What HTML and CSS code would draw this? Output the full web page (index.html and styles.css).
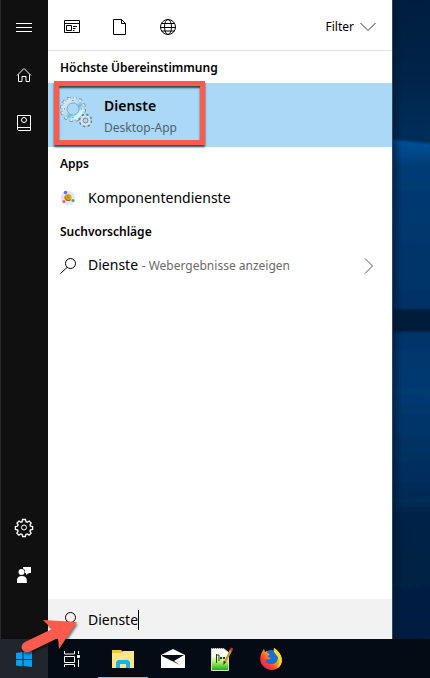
FILE: index.html
```html
<!DOCTYPE html>
<html lang="de">
<head>
<meta charset="utf-8">
<meta name="viewport" content="width=device-width, initial-scale=1">
<title>Windows-Suche</title>
<link rel="stylesheet" href="styles.css">
</head>
<body>
<div class="desktop">
  <div class="workspace">
    <nav class="rail" aria-label="Navigation">
      <button class="rail-button" type="button" aria-label="Menü">
        <svg width="24" height="24" viewBox="0 0 24 24"><path d="M4 8.500h16M4 12.500h16M4 16.500h16"/></svg>
      </button>
      <button class="rail-button" type="button" aria-label="Start">
        <svg width="24" height="24" viewBox="0 0 24 24"><path d="M5 12.500 12 5.500l7 7M6.500 11.500v7h3.500v-5h4v5h3.500v-7"/></svg>
      </button>
      <button class="rail-button" type="button" aria-label="Notizbuch">
        <svg width="24" height="24" viewBox="0 0 24 24"><path d="M5.500 4.500h13v15h-12l-1-1zM5.500 16.500h13"/><circle cx="12" cy="9" r="2.500"/></svg>
      </button>
      <span class="rail-space"></span>
      <button class="rail-button" type="button" aria-label="Einstellungen">
        <svg width="24" height="24" viewBox="0 0 24 24"><path stroke-width="1.300" d="M10.500 4.500h3l.5 2.200 1.300.5 1.900-1.200 2 2-1.200 1.900.5 1.300 2.100.4v2.800l-2.100.5-.6 1.300 1.200 1.900-2 2-1.900-1.200-1.300.5-.5 2.100h-2.800l-.5-2.100-1.300-.5-1.900 1.200-2-2 1.200-1.900-.6-1.300-2.100-.5v-2.800l2.100-.4.6-1.300L5 8l2-2 1.900 1.200 1.200-.5z"/><circle cx="12" cy="12.500" r="2.500"/></svg>
      </button>
      <button class="rail-button" type="button" aria-label="Feedback">
        <svg class="solid" width="24" height="24" viewBox="0 0 24 24"><path d="M11 4h8v6h-2l-3 2v-2h-1.200A3.600 3.600 0 0 0 11 5.500z"/><circle cx="9.500" cy="9" r="3"/><path d="M5 20v-2.500c0-3 1.500-4.500 4.800-4.500s5 1.500 5 4.500V20z"/></svg>
      </button>
    </nav>

    <main class="panel">
      <header class="scopes">
        <button class="scope" type="button" aria-label="Apps">
          <svg width="18" height="18" viewBox="0 0 18 18"><path d="M1.500 2.500h15v12h-15zM1.500 5.500h15M3.500 7.500h5v5h-5zM10 8.500h4M10 10.500h2.500M10 12.500h1.500"/></svg>
        </button>
        <button class="scope" type="button" aria-label="Dokumente">
          <svg width="18" height="18" viewBox="0 0 18 18"><path d="M2.500 1.500h8l4 4v11h-12zM10.500 1.500v4h4"/></svg>
        </button>
        <button class="scope" type="button" aria-label="Web">
          <svg width="18" height="18" viewBox="0 0 18 18"><circle cx="9" cy="9" r="7.500"/><ellipse cx="9" cy="9" rx="3.500" ry="7.500"/><path d="M2.500 5.500h13M1.500 9.500h15M2.500 13h13"/></svg>
        </button>
        <button class="filter" type="button">Filter
          <svg width="16" height="10" viewBox="0 0 16 10"><path d="m.5 1 7.500 7.500L15.500 1"/></svg>
        </button>
      </header>

      <section>
        <h2 class="group-title">Höchste Übereinstimmung</h2>
        <a class="best-match" href="#dienste">
          <svg class="gears" width="32" height="32" viewBox="0 0 32 32">
            <defs><linearGradient id="steel" x1="0" y1="0" x2="1" y2="1"><stop offset="0" stop-color="#dceaf2"/><stop offset=".45" stop-color="#b5dcf2"/><stop offset=".6" stop-color="#6fb9e8"/><stop offset=".8" stop-color="#c9fbff"/><stop offset="1" stop-color="#e9f6fa"/></linearGradient></defs>
            <circle cx="13" cy="12" r="11.500" fill="none" stroke="#71899c" stroke-width="3" stroke-dasharray="3.200 2.820"/>
            <circle cx="13" cy="12" r="11" fill="none" stroke="#dcebf3" stroke-width="2.400" stroke-dasharray="2.400 3.360" stroke-dashoffset="-.4"/>
            <circle cx="13" cy="12" r="8.200" fill="none" stroke="url(#steel)" stroke-width="4.400"/>
            <circle cx="13" cy="12" r="6" fill="none" stroke="#7e9bb0" stroke-width=".8"/>
            <path d="M13 3v1M13 20v1M4 12h1M21 12h1" stroke="#58788e"/>
            <circle cx="25.500" cy="23.500" r="5.500" fill="none" stroke="#647d90" stroke-width="2.500" stroke-dasharray="2.200 2.120"/>
            <circle cx="25.500" cy="23.500" r="4" fill="none" stroke="#dbe6ed" stroke-width="2.500"/>
            <circle cx="25.500" cy="23.500" r="2.500" fill="none" stroke="#708799"/>
          </svg>
          <span class="match-text"><strong class="match-title">Dienste</strong><span class="match-kind">Desktop-App</span></span>
          <span class="highlight"></span>
        </a>
      </section>

      <section>
        <h2 class="group-title">Apps</h2>
        <a class="result" href="#komponentendienste">
          <svg width="16" height="16" viewBox="0 0 16 16"><circle cx="8" cy="8" r="7.300" fill="#e3e7ef"/><circle cx="5.500" cy="2.500" r="1.800" fill="#6a72dc"/><circle cx="4" cy="11.500" r="1.500" fill="#e8606a"/><circle cx="13" cy="10.500" r="1.500" fill="#45b262"/><circle cx="8" cy="7.500" r="3.500" fill="#dca51a"/><path d="M5 6.500a3.500 3.500 0 0 0 6 3" fill="none" stroke="#8a6a14"/><path d="M8 5v3.500" stroke="#a87c10"/></svg>
          <span>Komponentendienste</span>
        </a>
      </section>

      <section>
        <h2 class="group-title">Suchvorschläge</h2>
        <a class="result" href="#web">
          <svg class="line" width="16" height="16" viewBox="0 0 16 16"><circle cx="10.500" cy="5.500" r="5"/><path d="m7 9.500-6.500 6"/></svg>
          <span>Dienste <span class="hint">- Webergebnisse anzeigen</span></span>
          <svg class="line chevron" width="10" height="16" viewBox="0 0 10 16"><path d="m1 .5 7.500 7.500L1 15.500"/></svg>
        </a>
      </section>

      <label class="search">
        <svg class="line" width="16" height="16" viewBox="0 0 16 16"><circle cx="10.500" cy="5.500" r="5"/><path d="m7 9.500-6.500 6"/></svg>
        <input class="search-input" type="text" value="Dienste" aria-label="Suche"><span class="caret"></span>
      </label>
    </main>
    <svg class="wallpaper" viewBox="0 0 38 639" preserveAspectRatio="none" aria-hidden="true">
      <defs>
        <linearGradient id="sky" x2="0" y2="1"><stop offset="0" stop-color="#001d40"/><stop offset=".12" stop-color="#002449"/><stop offset=".2" stop-color="#002c59"/></linearGradient>
        <linearGradient id="pane" x2="0" y2="1"><stop offset="0" stop-color="#00529b"/><stop offset=".08" stop-color="#003b75"/><stop offset=".45" stop-color="#003366"/><stop offset=".7" stop-color="#003a72"/><stop offset="1" stop-color="#002a55"/></linearGradient>
        <linearGradient id="floor" x2="0" y2="1"><stop offset="0" stop-color="#00305d"/><stop offset=".1" stop-color="#002448"/><stop offset="1" stop-color="#001c40"/></linearGradient>
        <linearGradient id="edge"><stop offset="0" stop-color="#001226" stop-opacity=".6"/><stop offset="1" stop-color="#001226" stop-opacity="0"/></linearGradient>
        <filter id="soft" x="-20%" width="140%"><feGaussianBlur stdDeviation="1"/></filter>
      </defs>
      <path fill="url(#sky)" d="M0 0h38v639H0z"/>
      <g filter="url(#soft)"><path fill="url(#pane)" d="M-5 139 43 144v354l-48 3z"/><path fill="#001a3a" d="M-5 309h48v23H-5z"/><path fill="url(#floor)" d="m-5 501 48-3v150H-5z"/></g>
      <path fill="url(#edge)" d="M0 0h10v639H0z"/>
      <path fill="#284b67" d="M0 0h1v639H0z"/>
    </svg>
  </div>

  <footer class="taskbar">
    <button class="task start" type="button" aria-label="Start">
      <svg width="24" height="24" viewBox="0 0 24 24"><path fill="#079fef" d="m4 6 6.500-1v7H4zM11.500 5 20 4v8h-8.500zM4 13h6.500v6.500L4 18.500zM11.500 13H20v7l-8.500-1z"/></svg>
    </button>
    <button class="task" type="button" aria-label="Taskansicht">
      <svg width="24" height="24" viewBox="0 0 24 24" fill="none" stroke="#fff"><path d="M3.500 4v3h10V4M3.500 9.500h10v6h-10zM3.500 20v-2.500h10V20M17.500 4v3M17.500 12.500V20"/><path fill="#fff" d="M16.500 8.500h2v2h-2z"/></svg>
    </button>
    <button class="task active" type="button" aria-label="Explorer">
      <svg width="24" height="24" viewBox="0 0 24 24"><path fill="#ffc721" d="M1 3h9l2 2v3H1z"/><path fill="#ffe48a" d="M1 6h9l2-2h11v17H1z"/><path fill="#ffc721" d="M2 3h7v2H2z"/><path fill="#12b4ef" d="M5 21v-6l2-2h10l2 2v6h-4v-4H9v4z"/></svg>
    </button>
    <button class="task" type="button" aria-label="Mail">
      <svg width="24" height="24" viewBox="0 0 24 24"><path fill="#fff" d="M0 8 12 2l12 6v13H0z"/><path fill="#070c14" d="m1 8 22 0-10 6 6 4L1 9z"/></svg>
    </button>
    <button class="task" type="button" aria-label="Notepad++">
      <svg width="24" height="24" viewBox="0 0 24 24"><defs><linearGradient id="page" x2="0" y2="1"><stop offset=".3" stop-color="#fbfff8"/><stop offset=".6" stop-color="#b8f06a"/><stop offset=".95" stop-color="#24b51d"/></linearGradient></defs><path fill="url(#page)" stroke="#d8dcd8" d="M1.500 1.500h12l5 4v18h-17z"/><path stroke="#777" stroke-dasharray="1 1" d="M2 1.500h12"/><path fill="none" stroke="#26382b" d="M6.500 7v9M6.500 8h2.500v6"/><path stroke="#26382b" stroke-width="2" d="M10 11h2M13 11h2"/><path stroke="#d89526" stroke-width="2.500" d="m21 3-6 12"/><path stroke="#ad3d36" stroke-width="2.500" d="m22 1-1 2.500"/><path fill="#222" d="m13.500 14 2.500 1-2.500 3z"/></svg>
    </button>
    <button class="task" type="button" aria-label="Firefox">
      <svg width="24" height="24" viewBox="0 0 24 24"><defs><linearGradient id="fox" x1="1" x2="0" y2="1"><stop offset=".15" stop-color="#ffe329"/><stop offset=".45" stop-color="#ff9818"/><stop offset=".7" stop-color="#ff3838"/><stop offset="1" stop-color="#e31678"/></linearGradient></defs><circle cx="12" cy="11" r="8" fill="#1471d5"/><path fill="url(#fox)" d="M3 5c-3 6-2 11 2 15 5 4 12 4 16-1 4-5 2-13-6-18 0 4 4 5 4 9 0 5-4 8-8 7-3 0-5-3-4-5 1 1 3 1 5-1l-3-1c0-2 1-2 2-3-2 0-3-1-3-3L6 5 5 2z"/><path fill="#ffdc22" d="M15 1c6 4 9 10 7 16-1 2-2 3-4 4 4-6 2-10 0-12-2-3-4-4-3-8z"/></svg>
    </button>
  </footer>

  <svg class="pointer" width="64" height="44" viewBox="0 0 64 44" aria-hidden="true"><path fill="#ff5b4c" d="m59 12-34-2 9 9-27 13a5 5 0 0 0 4 10l29-14 1 11z"/></svg>
</div>
</body>
</html>
```
FILE: styles.css
```css
* {
  box-sizing: border-box;
}

body {
  margin: 0;
  font-family: "Segoe UI", "Noto Sans", "Open Sans", sans-serif;
  font-size: 14px;
  line-height: 20px;
  color: #000;
}

button {
  padding: 0;
  border: 0;
  background: none;
  font: inherit;
  color: inherit;
}

a {
  color: inherit;
  text-decoration: none;
}

svg {
  display: block;
  flex: none;
}

.desktop {
  position: relative;
  display: flex;
  flex-direction: column;
  min-height: 100vh;
  overflow: hidden;
}

.workspace {
  display: flex;
  flex: 1;
}

.rail {
  display: flex;
  flex: none;
  flex-direction: column;
  width: 48px;
  padding: 3px 0 40px;
  background: #101010;
  box-shadow: inset 1px 0 #292929;
}

.rail-button {
  display: grid;
  place-items: center;
  height: 48px;
}

.rail-button svg {
  fill: none;
  stroke: #fff;
}

.rail-button .solid {
  fill: #fff;
  stroke: none;
}

.rail-space {
  flex: 1;
}

.panel {
  display: flex;
  flex: 0 1 344px;
  flex-direction: column;
  min-width: 0;
  background: #fff;
}

.scopes {
  display: flex;
  align-items: center;
  gap: 30px;
  height: 51px;
  padding: 3px 16px 0 15px;
  border-bottom: 1px solid #e0e0e0;
}

.scope svg,
.filter svg,
.line {
  fill: none;
  stroke: #000;
}

.filter {
  display: flex;
  align-items: center;
  gap: 6px;
  margin-left: auto;
  font-size: 12px;
}

.filter svg {
  stroke: #333;
}

.group-title {
  margin: 0;
  padding: 7px 12px 5px;
  font-size: 12px;
  font-weight: 600;
  line-height: 20px;
}

.best-match {
  position: relative;
  display: flex;
  align-items: center;
  gap: 12px;
  height: 64px;
  padding: 0 12px;
  background: #abd8f7;
}

.gears {
  margin-bottom: 4px;
}

.match-text {
  display: flex;
  flex-direction: column;
  gap: 2px;
  padding-top: 4px;
}

.match-title {
  font-weight: 600;
}

.match-kind {
  font-size: 12px;
  color: #4c6472;
}

.highlight {
  position: absolute;
  top: -2px;
  left: 6px;
  width: 151px;
  height: 64px;
  border: 5px solid #ff5b4c;
  box-shadow: 0 2px 2px #33454f, inset 0 2px 2px #33454f;
}

.result {
  display: flex;
  align-items: center;
  gap: 12px;
  height: 36px;
  padding: 1px 18px 0 12px;
  white-space: nowrap;
}

.hint {
  font-size: 12px;
  color: #6a6a6a;
}

.chevron {
  margin-left: auto;
  stroke: #555;
}

.search {
  display: flex;
  align-items: center;
  gap: 12px;
  height: 40px;
  margin-top: auto;
  padding: 1px 12px 0;
  background: #f2f2f2;
}

.search-input {
  field-sizing: content;
  max-width: 100%;
  padding: 0;
  border: 0;
  outline: 0;
  background: none;
  font: inherit;
  color: inherit;
}

.caret {
  width: 1px;
  height: 20px;
  margin-left: -12px;
  background: #000;
}

.wallpaper {
  flex: 1;
  width: 0;
  min-width: 0;
  height: auto;
}

.taskbar {
  display: flex;
  gap: 1px;
  height: 39px;
  background: #050b14;
}

.task {
  display: grid;
  place-items: center;
  width: 48px;
}

.start {
  background: #20262c;
}

.active {
  width: 50px;
  box-shadow: inset 0 -1px #76b9ed;
}

.pointer {
  position: absolute;
  bottom: 24px;
  left: 18px;
  filter: drop-shadow(1px 2px 1px #0008);
}
```
